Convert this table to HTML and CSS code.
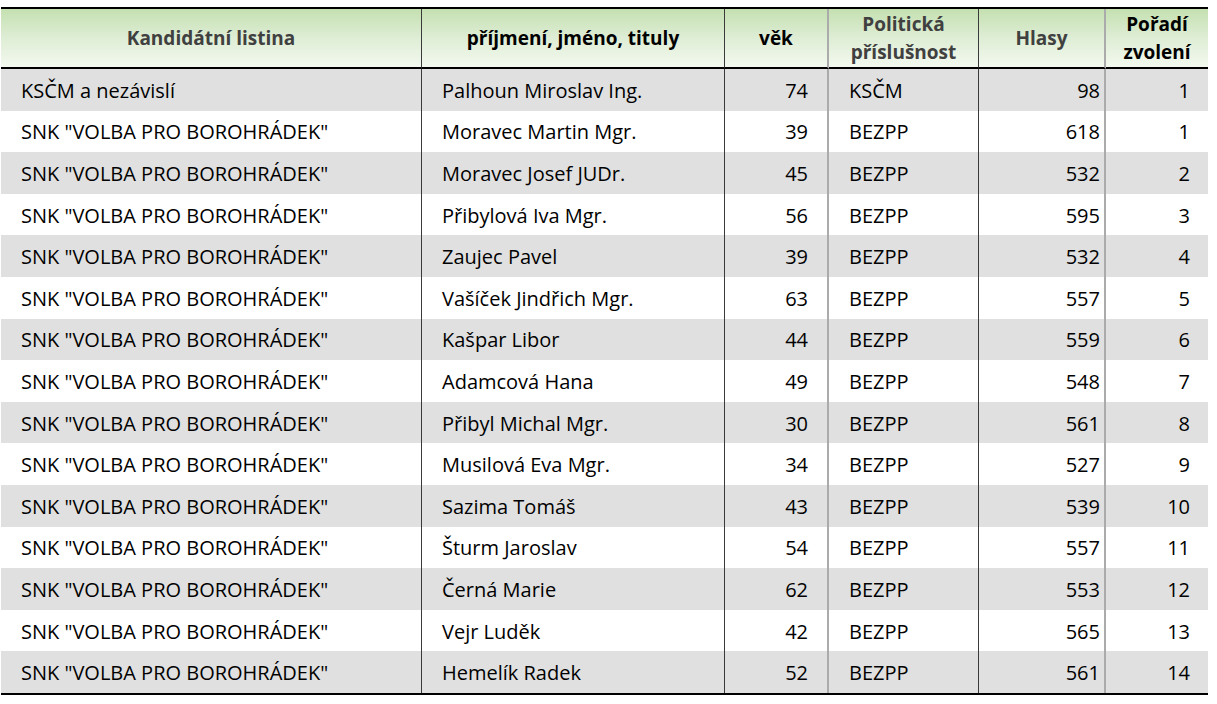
FILE: index.html
```html
<!DOCTYPE html>
<html lang="cs">
<head>
<meta charset="utf-8">
<title>Kandidátní listina</title>
<link rel="stylesheet" href="styles.css">
</head>
<body>
<table class="results">
  <colgroup>
    <col class="c1"><col class="c2"><col class="c3"><col class="c4"><col class="c5"><col class="c6">
  </colgroup>
  <thead>
    <tr>
      <th class="b-dark muted">Kandidátní listina</th>
      <th class="b-dark">příjmení, jméno, tituly</th>
      <th class="b-light">věk</th>
      <th class="b-dark muted">Politická<br>příslušnost</th>
      <th class="b-light muted">Hlasy</th>
      <th>Pořadí<br>zvolení</th>
    </tr>
  </thead>
  <tbody>
    <tr class="alt"><td class="b-dark l1">KSČM a nezávislí</td><td class="b-dark l2">Palhoun Miroslav Ing.</td><td class="b-light num n3">74</td><td class="b-dark l4">KSČM</td><td class="b-light num n5">98</td><td class="num n6">1</td></tr>
    <tr><td class="b-dark l1">SNK "VOLBA PRO BOROHRÁDEK"</td><td class="b-dark l2">Moravec Martin Mgr.</td><td class="b-light num n3">39</td><td class="b-dark l4">BEZPP</td><td class="b-light num n5">618</td><td class="num n6">1</td></tr>
    <tr class="alt"><td class="b-dark l1">SNK "VOLBA PRO BOROHRÁDEK"</td><td class="b-dark l2">Moravec Josef JUDr.</td><td class="b-light num n3">45</td><td class="b-dark l4">BEZPP</td><td class="b-light num n5">532</td><td class="num n6">2</td></tr>
    <tr><td class="b-dark l1">SNK "VOLBA PRO BOROHRÁDEK"</td><td class="b-dark l2">Přibylová Iva Mgr.</td><td class="b-light num n3">56</td><td class="b-dark l4">BEZPP</td><td class="b-light num n5">595</td><td class="num n6">3</td></tr>
    <tr class="alt"><td class="b-dark l1">SNK "VOLBA PRO BOROHRÁDEK"</td><td class="b-dark l2">Zaujec Pavel</td><td class="b-light num n3">39</td><td class="b-dark l4">BEZPP</td><td class="b-light num n5">532</td><td class="num n6">4</td></tr>
    <tr><td class="b-dark l1">SNK "VOLBA PRO BOROHRÁDEK"</td><td class="b-dark l2">Vašíček Jindřich Mgr.</td><td class="b-light num n3">63</td><td class="b-dark l4">BEZPP</td><td class="b-light num n5">557</td><td class="num n6">5</td></tr>
    <tr class="alt"><td class="b-dark l1">SNK "VOLBA PRO BOROHRÁDEK"</td><td class="b-dark l2">Kašpar Libor</td><td class="b-light num n3">44</td><td class="b-dark l4">BEZPP</td><td class="b-light num n5">559</td><td class="num n6">6</td></tr>
    <tr><td class="b-dark l1">SNK "VOLBA PRO BOROHRÁDEK"</td><td class="b-dark l2">Adamcová Hana</td><td class="b-light num n3">49</td><td class="b-dark l4">BEZPP</td><td class="b-light num n5">548</td><td class="num n6">7</td></tr>
    <tr class="alt"><td class="b-dark l1">SNK "VOLBA PRO BOROHRÁDEK"</td><td class="b-dark l2">Přibyl Michal Mgr.</td><td class="b-light num n3">30</td><td class="b-dark l4">BEZPP</td><td class="b-light num n5">561</td><td class="num n6">8</td></tr>
    <tr><td class="b-dark l1">SNK "VOLBA PRO BOROHRÁDEK"</td><td class="b-dark l2">Musilová Eva Mgr.</td><td class="b-light num n3">34</td><td class="b-dark l4">BEZPP</td><td class="b-light num n5">527</td><td class="num n6">9</td></tr>
    <tr class="alt"><td class="b-dark l1">SNK "VOLBA PRO BOROHRÁDEK"</td><td class="b-dark l2">Sazima Tomáš</td><td class="b-light num n3">43</td><td class="b-dark l4">BEZPP</td><td class="b-light num n5">539</td><td class="num n6">10</td></tr>
    <tr><td class="b-dark l1">SNK "VOLBA PRO BOROHRÁDEK"</td><td class="b-dark l2">Šturm Jaroslav</td><td class="b-light num n3">54</td><td class="b-dark l4">BEZPP</td><td class="b-light num n5">557</td><td class="num n6">11</td></tr>
    <tr class="alt"><td class="b-dark l1">SNK "VOLBA PRO BOROHRÁDEK"</td><td class="b-dark l2">Černá Marie</td><td class="b-light num n3">62</td><td class="b-dark l4">BEZPP</td><td class="b-light num n5">553</td><td class="num n6">12</td></tr>
    <tr><td class="b-dark l1">SNK "VOLBA PRO BOROHRÁDEK"</td><td class="b-dark l2">Vejr Luděk</td><td class="b-light num n3">42</td><td class="b-dark l4">BEZPP</td><td class="b-light num n5">565</td><td class="num n6">13</td></tr>
    <tr class="alt"><td class="b-dark l1">SNK "VOLBA PRO BOROHRÁDEK"</td><td class="b-dark l2">Hemelík Radek</td><td class="b-light num n3">52</td><td class="b-dark l4">BEZPP</td><td class="b-light num n5">561</td><td class="num n6">14</td></tr>
  </tbody>
</table>
</body>
</html>
```

FILE: styles.css
```css
html, body {
  margin: 0;
  padding: 0;
  background: #ffffff;
}

body {
  padding: 7px 0 0 1px;
  font-family: "Open Sans", "Noto Sans", "Liberation Sans", sans-serif;
  color: #000;
}

.results {
  border-collapse: separate;
  border-spacing: 0;
  table-layout: fixed;
  width: 1207px;
  border-top: 2px solid #000;
  border-bottom: 2px solid #000;
  font-size: 20px;
}

.c1 { width: 421px; }
.c2 { width: 303px; }
.c3 { width: 104px; }
.c4 { width: 150px; }
.c5 { width: 127px; }
.c6 { width: 102px; }

.results th,
.results td {
  padding: 0;
  box-sizing: border-box;
  white-space: nowrap;
}

.results thead th {
  height: 60px;
  border-bottom: 2px solid #000;
  background: linear-gradient(to bottom, #c4e0b0 0%, #dcecd2 45%, #f3f9ef 100%);
  font-size: 19px;
  font-weight: 700;
  text-align: center;
  vertical-align: middle;
  line-height: 28px;
  color: #000;
}

.results thead th.muted {
  color: #404040;
}

.results tbody td {
  height: 41.6px;
  padding-top: 2px;
  vertical-align: middle;
  line-height: 24px;
}

.results tbody tr.alt td {
  background: #e0e0e0;
}

.b-dark { border-right: 1px solid #3a3a3a; }
.b-light { border-right: 2px solid #ababab; }

.results tbody td.l1,
.results tbody td.l2,
.results tbody td.l4 { padding-left: 20px; }

.num { text-align: right; }
.results tbody td.n3 { padding-right: 19px; }
.results tbody td.n5 { padding-right: 4px; }
.results tbody td.n6 { padding-right: 18px; }
```
